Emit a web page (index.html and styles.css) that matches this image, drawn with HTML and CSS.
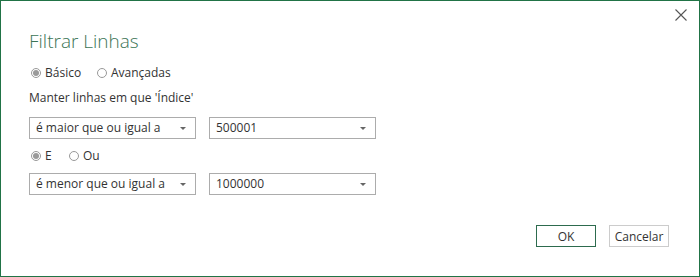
FILE: index.html
```html
<!DOCTYPE html>
<html lang="pt">
<head>
<meta charset="utf-8">
<title>Filtrar Linhas</title>
<link rel="stylesheet" href="styles.css">
</head>
<body>
<div class="dialog">
  <button class="close" aria-label="Fechar">
    <svg width="12" height="12" viewBox="0 0 12 12"><path d="M0.5 0.5 L11.5 11.5 M11.5 0.5 L0.5 11.5" stroke="#555" stroke-width="1.1" fill="none"/></svg>
  </button>
  <h1 class="title">Filtrar Linhas</h1>
  <div class="radios top-radios">
    <label class="radio"><span class="dot checked"></span>Básico</label>
    <label class="radio"><span class="dot"></span>Avançadas</label>
  </div>
  <div class="caption">Manter linhas em que 'Índice'</div>
  <div class="row row-first">
    <div class="select"><span>é maior que ou igual a</span><span class="arrow"></span></div>
    <div class="select"><span>500001</span><span class="arrow"></span></div>
  </div>
  <div class="radios mid-radios">
    <label class="radio"><span class="dot checked"></span>E</label>
    <label class="radio"><span class="dot"></span>Ou</label>
  </div>
  <div class="row row-second">
    <div class="select"><span>é menor que ou igual a</span><span class="arrow"></span></div>
    <div class="select"><span>1000000</span><span class="arrow"></span></div>
  </div>
  <div class="buttons">
    <button class="btn primary">OK</button>
    <button class="btn">Cancelar</button>
  </div>
</div>
</body>
</html>
```

FILE: styles.css
```css
html, body {
  margin: 0;
  padding: 0;
  background: #ffffff;
}
.dialog {
  position: relative;
  width: 700px;
  height: 277px;
  box-sizing: border-box;
  border: 1px solid #217346;
  padding: 0 0 0 28px;
  font-family: "Open Sans", "Noto Sans", sans-serif;
  font-size: 12px;
  color: #333333;
  display: flex;
  flex-direction: column;
}
.close {
  position: absolute;
  top: 7px;
  right: 11px;
  width: 14px;
  height: 14px;
  padding: 1px;
  border: 0;
  background: transparent;
  display: flex;
}
.title {
  margin: 27px 0 0 0;
  font-family: "Open Sans", sans-serif;
  font-weight: 300;
  font-size: 19px;
  line-height: 26px;
  color: #3b7455;
}
.radios {
  display: flex;
  gap: 0;
  height: 16px;
  align-items: center;
}
.top-radios {
  margin-top: 11px;
}
.top-radios .radio:first-child { width: 66px; }
.mid-radios {
  margin-top: 9px;
}
.mid-radios .radio:first-child { width: 38px; }
.radio {
  display: flex;
  align-items: center;
  gap: 4px;
  line-height: 16px;
}
.dot {
  width: 8px;
  height: 8px;
  border: 1px solid #999999;
  border-radius: 50%;
  margin-left: 2px;
  box-sizing: content-box;
  display: inline-flex;
  align-items: center;
  justify-content: center;
}
.dot.checked::after {
  content: "";
  width: 6px;
  height: 6px;
  border-radius: 50%;
  background: #9a9a9a;
}
.caption {
  margin-top: 9px;
  line-height: 16px;
}
.row {
  display: flex;
  gap: 13px;
}
.row-first {
  margin-top: 11px;
}
.row-second {
  margin-top: 9px;
}
.select {
  width: 167px;
  height: 22px;
  box-sizing: border-box;
  border: 1px solid #acacac;
  display: flex;
  align-items: center;
  justify-content: space-between;
  padding: 0 9px 0 6px;
  line-height: 20px;
}
.arrow {
  width: 0;
  height: 0;
  border-left: 3px solid transparent;
  border-right: 3px solid transparent;
  border-top: 3px solid #666666;
  margin-top: 1px;
}
.buttons {
  display: flex;
  justify-content: flex-end;
  gap: 13px;
  margin-top: 30px;
  padding-right: 30px;
}
.btn {
  width: 60px;
  height: 22px;
  box-sizing: border-box;
  border: 1px solid #cccccc;
  background: #ffffff;
  font-family: "Open Sans", sans-serif;
  font-size: 12px;
  color: #333333;
  padding: 0;
}
.btn.primary {
  border-color: #2d6b4e;
}
```
